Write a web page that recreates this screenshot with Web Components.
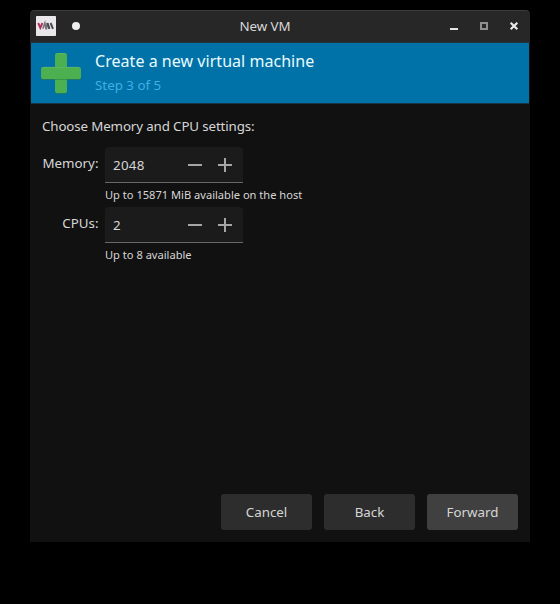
<!DOCTYPE html>
<html lang="en">
<head>
<meta charset="utf-8">
<title>New VM</title>
<style>
html{background:#000}
body{margin:0;padding:10px 30px;background:#000;color:#d6d6d6;font:13.33px/18px "Noto Sans",sans-serif}
</style>
</head>
<body>
<vm-window>
  <vm-titlebar slot="top">New VM</vm-titlebar>
  <vm-banner slot="top"><span slot="title">Create a new virtual machine</span><span slot="step">Step 3 of 5</span></vm-banner>
  <vm-form>
    <span slot="heading">Choose Memory and CPU settings:</span>
    <vm-field label="Memory:" value="2048">Up to 15871 MiB available on the host</vm-field>
    <vm-field label="CPUs:" value="2">Up to 8 available</vm-field>
  </vm-form>
  <vm-button slot="actions">Cancel</vm-button>
  <vm-button slot="actions">Back</vm-button>
  <vm-button slot="actions" primary>Forward</vm-button>
</vm-window>
<script>
const define = (name, html, setup) => customElements.define(name, class extends HTMLElement {
  connectedCallback() {
    if (this.shadowRoot) return;
    const root = this.attachShadow({mode: 'open'});
    const template = document.createElement('template');
    template.innerHTML = html;
    root.append(template.content.cloneNode(true));
    if (setup) setup(this, root);
  }
});

define('vm-window', `<style>
:host{display:flex;flex-direction:column;box-sizing:border-box;width:500px;height:532px;background:#111;border-radius:4px 4px 0 0;overflow:hidden}
main{flex:1}
footer{display:flex;justify-content:flex-end;gap:12px;padding:12px}
</style><slot name="top"></slot><main><slot></slot></main><footer><slot name="actions"></slot></footer>`);

define('vm-titlebar', `<style>
:host{display:grid;grid-template-columns:1fr auto 1fr;align-items:center;box-sizing:border-box;height:33px;padding:0 10px 0 6px;background:#272727;border-top:1px solid #3b3b3b;border-bottom:1px solid #22333c;border-radius:4px 4px 0 0;color:#d8d8d8}
.left{display:flex;align-items:center;gap:16px}
.right{display:flex;justify-content:flex-end;gap:18px}
.right,.left{margin-top:-1px}
.title{padding-right:26px;margin-top:-2px;letter-spacing:-.1px}
svg{display:block}
</style>
<div class="left">
<svg width="20" height="20" viewBox="0 0 20 20"><rect width="20" height="20" rx=".8" fill="#e9e7e9"/><path d="M2.2 7l2.1 4.8L6.4 7" fill="none" stroke="#b0345c" stroke-width="2"/><path d="M6.8 12.8L8.9 7l1 5.8h.6L11 7l2 5.8" fill="none" stroke="#77737a" stroke-width="1.5"/><path d="M11.5 7l2 5.8M14.6 7l2.4 5.8" fill="none" stroke="#4c4b50" stroke-width="2"/></svg>
<svg width="8" height="8"><circle cx="4" cy="4" r="4" fill="#eee"/></svg>
</div><div class="title"><slot></slot></div>
<div class="right">
<svg width="12" height="12"><path d="M2 8h8v2H2z" fill="#e4e4e4"/></svg>
<svg width="12" height="12"><path d="M3 3h6v6H3z" fill="none" stroke="#8f8f8f" stroke-width="2"/></svg>
<svg width="12" height="12"><path d="M2.7 2.7l6.6 6.6M9.3 2.7L2.7 9.3" stroke="#e8e8e8" stroke-width="2.2"/></svg>
</div>`);

define('vm-banner', `<style>
:host{display:flex;gap:14px;box-sizing:border-box;height:61px;padding:10px 0 0 10px;margin:0 1px;background:#0072a8;border-bottom:1px solid #1a3442}
svg{flex:none}
.copy{display:flex;flex-direction:column;margin-top:-3px}
.title{font-size:16px;line-height:22px;letter-spacing:.04px;color:#e9fbff}
.step{line-height:18px;margin-top:4px;color:#42aee3}
</style>
<svg width="40" height="41" viewBox="0 0 40 41"><path d="M16 0h8a2 2 0 0 1 2 2v12h12a2 2 0 0 1 2 2v8a2 2 0 0 1-2 2H26v12a2 2 0 0 1-2 2h-8a2 2 0 0 1-2-2V26H2a2 2 0 0 1-2-2v-8a2 2 0 0 1 2-2h12V2a2 2 0 0 1 2-2z" fill="#2e7b50" transform="translate(0 .7)"/><rect x="14" width="12" height="40" rx="2" fill="#4caf50"/><path d="M14 26.4h12" stroke="#388e48"/><rect y="14" width="40" height="12" rx="2" fill="#4caf50"/><path d="M16 .4h8M2 14.4h36" stroke="#66b866" stroke-width=".8"/></svg>
<div class="copy"><div class="title"><slot name="title"></slot></div><div class="step"><slot name="step"></slot></div></div>`);

define('vm-form', `<style>
:host{display:flex;flex-direction:column;padding:13px 12px}
.heading{margin-bottom:12px;letter-spacing:-.13px}
</style><div class="heading"><slot name="heading"></slot></div><slot></slot>`);

define('vm-field', `<style>
:host{display:grid;grid-template-columns:56.5px 1fr;column-gap:6.5px;height:60px}
.label{text-align:right;padding-top:7px;white-space:nowrap}
.spin{display:flex;align-items:center;box-sizing:border-box;width:138px;height:36px;padding:0 10px 0 8px;background:#1b1b1b;border-bottom:1px solid #686868;border-radius:4px 4px 0 0}
.value{flex:1;padding-top:1px;letter-spacing:.3px}
svg{display:block}
svg+svg{margin-left:14px}
.hint{font-size:11.1px;line-height:16px;margin-top:4px}
</style><div class="label"></div><div><div class="spin"><span class="value"></span>
<svg width="16" height="16"><path d="M1 7h14v2H1z" fill="#a6a6a6"/></svg>
<svg width="16" height="16"><path d="M1 7h6V1h2v6h6v2H9v6H7V9H1z" fill="#a6a6a6"/></svg></div>
<div class="hint"><slot></slot></div></div>`, (host, root) => {
  root.querySelector('.label').textContent = host.getAttribute('label');
  root.querySelector('.value').textContent = host.getAttribute('value');
});

define('vm-button', `<style>
:host{display:flex;align-items:center;justify-content:center;box-sizing:border-box;width:91px;height:36px;background:#2d2d2d;border-radius:3px}
:host([primary]){background:#404040}
</style><slot></slot>`);
</script>
</body>
</html>
